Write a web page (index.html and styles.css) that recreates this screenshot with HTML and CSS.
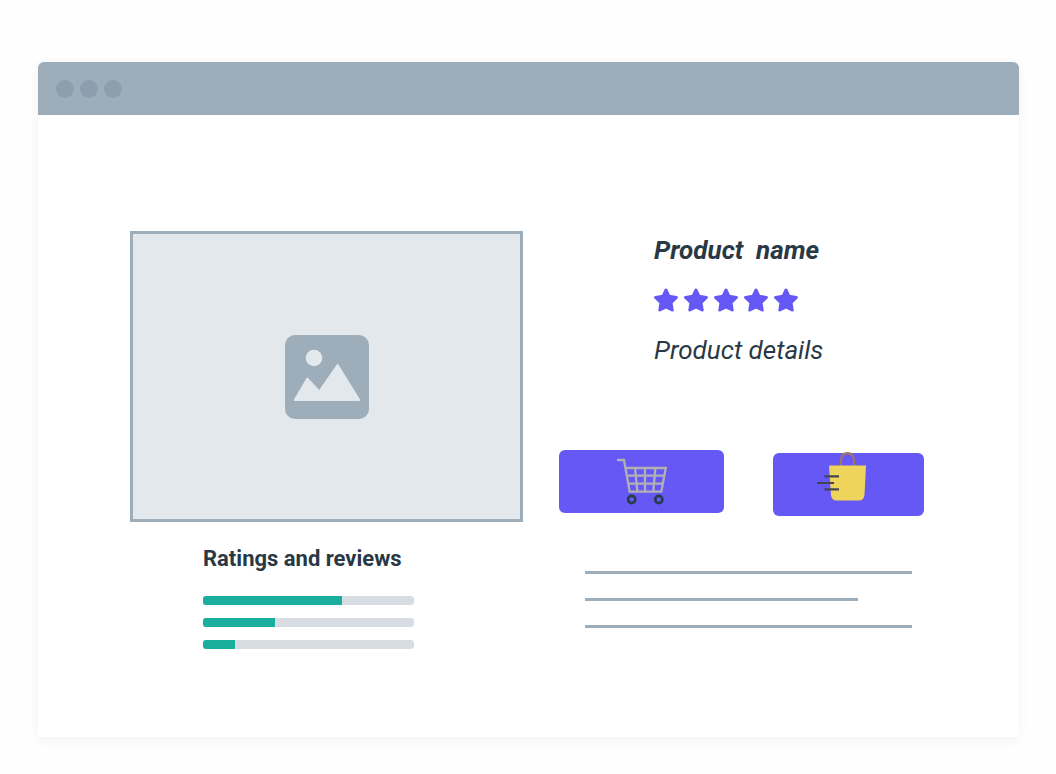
FILE: index.html
```html
<!DOCTYPE html>
<html lang="en">
<head>
<meta charset="utf-8">
<title>Product page wireframe</title>
<link rel="stylesheet" href="styles.css">
</head>
<body>
<svg class="defs" aria-hidden="true">
  <symbol id="star" viewBox="0 0 24 24">
    <path d="M12 2 L14.9 8.2 L22.4 9.4 L17 14.7 L18.2 22 L12 18.8 L5.8 22 L7 14.7 L1.6 9.4 L9.1 8.2 Z" fill="currentColor" stroke="currentColor" stroke-width="3" stroke-linejoin="round"/>
  </symbol>
</svg>
<div class="window">
  <header class="titlebar">
    <span class="dot"></span><span class="dot"></span><span class="dot"></span>
  </header>
  <main class="content">
    <section class="media">
      <div class="picture">
        <svg class="picture-icon" viewBox="0 0 84 84" role="img" aria-label="Product picture">
          <rect width="84" height="84" rx="10" fill="#9eadba"/>
          <circle cx="29" cy="23" r="8.3" fill="#e2e8ec"/>
          <path d="M9.8 65 L22.3 43.7 L34.3 56.5 L52.6 30 L74.2 65 Z" fill="#e2e8ec" stroke="#e2e8ec" stroke-width="2" stroke-linejoin="round"/>
        </svg>
      </div>
      <div class="ratings">
        <h2 class="ratings-title">Ratings and reviews</h2>
        <div class="bar"><div class="bar-fill" style="width: 66%"></div></div>
        <div class="bar"><div class="bar-fill" style="width: 34%"></div></div>
        <div class="bar"><div class="bar-fill" style="width: 15%"></div></div>
      </div>
    </section>
    <section class="details">
      <div class="summary">
        <h1 class="name">Product&nbsp; name</h1>
        <div class="stars" role="img" aria-label="5 stars">
          <svg class="star"><use href="#star"/></svg>
          <svg class="star"><use href="#star"/></svg>
          <svg class="star"><use href="#star"/></svg>
          <svg class="star"><use href="#star"/></svg>
          <svg class="star"><use href="#star"/></svg>
        </div>
        <p class="description">Product details</p>
      </div>
      <div class="actions">
        <button class="action action-cart" type="button" aria-label="Add to cart">
          <svg class="action-icon" viewBox="0 0 165 63" fill="none">
            <g stroke="#b3b0b5" stroke-width="2.3">
              <path d="M58 10 H65 L70.7 41.7 H102.3 L106.8 18 H66.5"/>
              <path d="M67.8 25.7 H105.4 M69.2 33.7 H103.9 M76 18 L78.4 41.7 M86 18 V41.7 M96.4 18 L94.2 41.7"/>
            </g>
            <circle cx="72.7" cy="49.5" r="3.6" stroke="#293c4b" stroke-width="2.6"/>
            <circle cx="99.8" cy="49.5" r="3.6" stroke="#293c4b" stroke-width="2.6"/>
          </svg>
        </button>
        <button class="action action-buy" type="button" aria-label="Buy now">
          <svg class="action-icon" viewBox="0 0 151 63" fill="none">
            <path d="M68 13 V7 A6.5 6.8 0 0 1 81 7 V13" stroke="#9f7464" stroke-width="2.2"/>
            <path d="M56 12.5 H93 L91.5 42 Q91.1 47.5 85.5 47.5 H64 Q58.5 47.5 58 42 Z" fill="#efd45b"/>
            <path d="M51.5 23.3 H66 M44 30 H61 M51.5 36.4 H66" stroke="#454553" stroke-width="2.2"/>
          </svg>
        </button>
      </div>
      <div class="text-lines">
        <div class="text-line"></div>
        <div class="text-line text-line-short"></div>
        <div class="text-line"></div>
      </div>
    </section>
  </main>
</div>
</body>
</html>
```
FILE: styles.css
```css
* {
  box-sizing: border-box;
}

body {
  display: flex;
  min-height: 100vh;
  margin: 0;
  padding: 62px 37px 37px 38px;
  background: #fefefe;
  color: #293845;
  font-family: Roboto, "Liberation Sans", sans-serif;
}

h1,
h2,
p {
  margin: 0;
}

.defs {
  position: absolute;
  width: 0;
  height: 0;
}

.window {
  flex: 1;
  border-radius: 6px 6px 0 0;
  background: #fff;
  box-shadow: 0 3px 12px rgba(0, 0, 0, 0.05);
}

.titlebar {
  display: flex;
  align-items: center;
  gap: 6px;
  height: 53px;
  padding: 0 18px;
  border-radius: 6px 6px 0 0;
  background: #9eadba;
}

.dot {
  width: 18px;
  height: 18px;
  border-radius: 50%;
  background: #8e9eae;
}

.content {
  display: grid;
  grid-template-columns: 393fr 365fr;
  gap: 36px;
  padding: 116px 95px 0 92px;
}

.picture {
  display: grid;
  place-items: center;
  height: 291px;
  border: 3px solid #9eadba;
  background: #e2e8ec;
}

.picture-icon {
  width: 84px;
  height: 84px;
}

.ratings {
  display: flex;
  flex-direction: column;
  gap: 13px;
  padding: 23px 109px 0 73px;
}

.ratings-title {
  padding-bottom: 10px;
  font-size: 22px;
  font-weight: 700;
  line-height: 28px;
  white-space: nowrap;
}

.bar {
  height: 9px;
  border-radius: 3px;
  background: #d8dde3;
  overflow: hidden;
}

.bar-fill {
  height: 100%;
  background: #1aae9f;
}

.summary {
  display: flex;
  flex-direction: column;
  gap: 20px;
  padding: 3px 0 0 95px;
}

.name {
  font-size: 26px;
  font-style: italic;
  font-weight: 700;
  line-height: 32px;
}

.stars {
  display: flex;
  gap: 6px;
  color: #6558f5;
}

.star {
  width: 24px;
  height: 28px;
}

.description {
  font-size: 26px;
  font-style: italic;
  line-height: 32px;
}

.actions {
  display: flex;
  justify-content: space-between;
  height: 66px;
  margin-top: 84px;
}

.action {
  height: 63px;
  padding: 0;
  border: 0;
  border-radius: 6px;
  background: #6558f5;
}

.action-cart {
  align-self: flex-start;
  width: 165px;
}

.action-buy {
  align-self: flex-end;
  width: 151px;
}

.action-icon {
  display: block;
  width: 100%;
  height: 100%;
  overflow: visible;
}

.text-lines {
  display: flex;
  flex-direction: column;
  gap: 24px;
  padding: 55px 12px 0 26px;
}

.text-line {
  height: 3px;
  background: #9eadba;
}

.text-line-short {
  width: 83.5%;
}
```
